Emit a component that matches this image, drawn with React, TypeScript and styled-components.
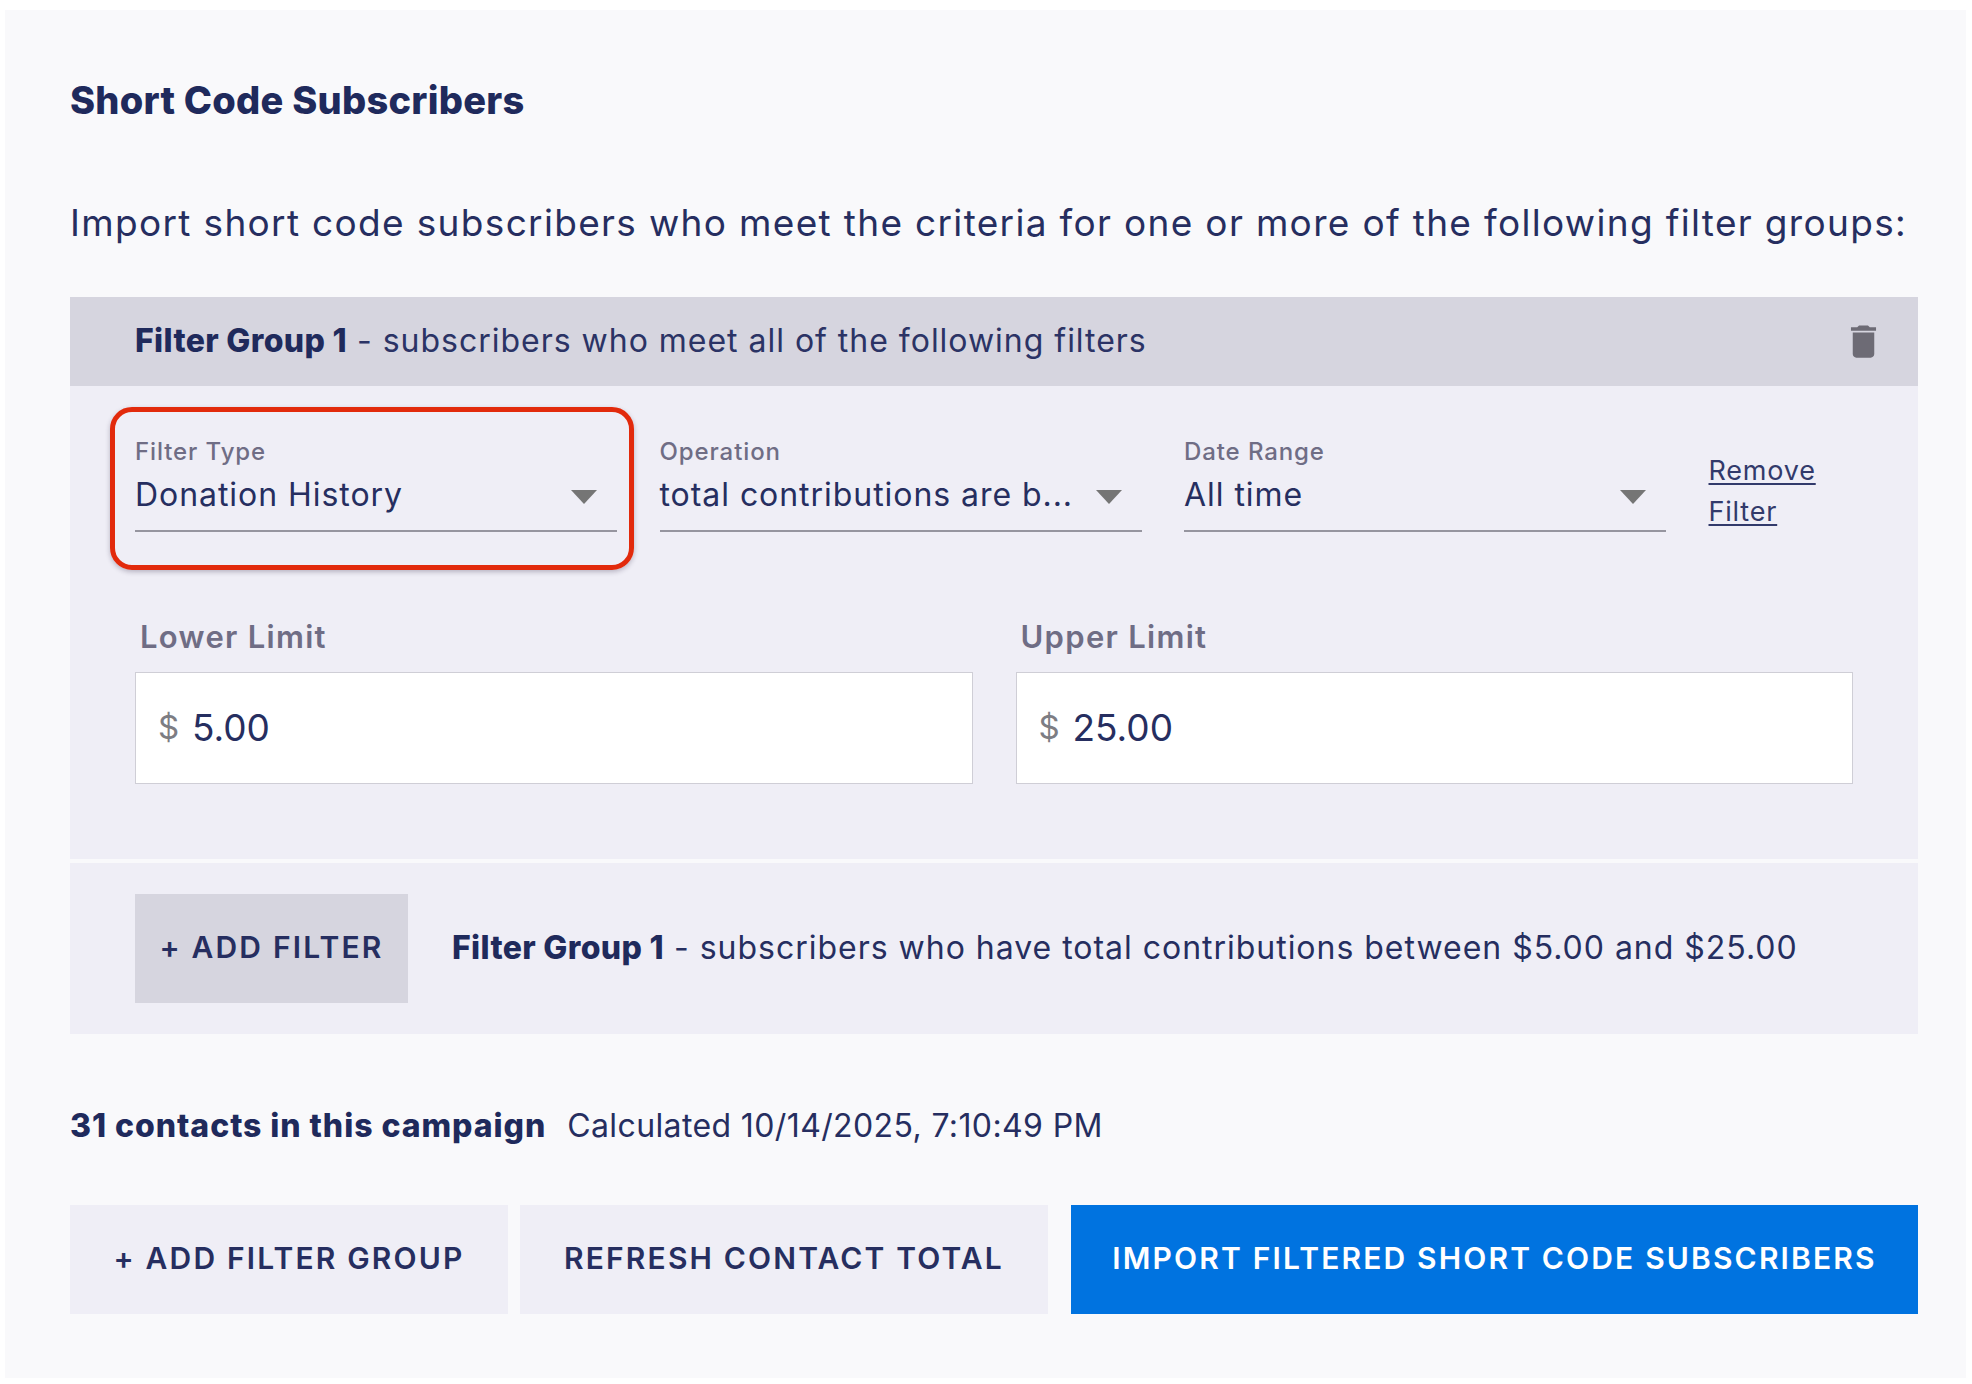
import React from "react";
import styled, { createGlobalStyle } from "styled-components";
import { MdDelete } from "react-icons/md";

const GlobalStyle = createGlobalStyle`
  html, body {
    margin: 0;
    padding: 0;
    background: #ffffff;
  }
  * {
    box-sizing: border-box;
  }
`;

const Page = styled.div`
  width: 1972px;
  height: 1384px;
  padding: 10px 6px 6px 5px;
  font-family: Inter, "Liberation Sans", sans-serif;
  color: #262e60;
`;

const Card = styled.section`
  height: 100%;
  background: #f9f9fb;
  padding: 68px 48px 0 65px;
`;

const Title = styled.h2`
  margin: 0 0 76px;
  font-size: 38px;
  line-height: 44px;
  font-weight: 800;
  letter-spacing: 0.25px;
  color: #1f2a5c;
`;

const Intro = styled.p`
  margin: 0 0 49px;
  font-size: 37px;
  line-height: 50px;
  font-weight: 400;
  letter-spacing: 1.33px;
  white-space: nowrap;
`;

const GroupHeader = styled.div`
  height: 89px;
  padding: 0 33px 0 65px;
  background: #d6d5df;
  display: flex;
  align-items: center;
  justify-content: space-between;
  font-size: 32px;
  color: #2b3365;
`;

const Strong = styled.strong`
  font-weight: 800;
  letter-spacing: 0.35px;
  color: #1f2a5c;
`;

const Summary = styled.span`
  margin-bottom: 3px;
  letter-spacing: 0.98px;
`;

const GroupBody = styled.div`
  background: #efeef6;
  padding: 52px 65px 75px 65px;
`;

const FilterRow = styled.div`
  display: flex;
  gap: 42.5px;
  align-items: flex-start;
`;

const SelectField = styled.div`
  position: relative;
  width: 482px;
  height: 94px;
  border-bottom: 2px solid #96959f;
`;

const SelectLabel = styled.div`
  font-size: 24px;
  line-height: 28px;
  font-weight: 500;
  letter-spacing: 0.9px;
  color: #6f6d85;
`;

const SelectValue = styled.div`
  display: flex;
  align-items: center;
  justify-content: space-between;
  height: 44px;
  margin-top: 7px;
  padding-right: 20px;
  font-size: 32px;
  line-height: 44px;
  letter-spacing: 0.95px;
  white-space: nowrap;
`;

const Arrow = styled.svg`
  width: 26px;
  height: 14px;
  margin-top: 4px;
  flex: none;
  fill: #757575;
`;

const Highlight = styled.div`
  position: absolute;
  left: -25px;
  top: -31px;
  width: 524px;
  height: 163px;
  border: 5px solid #e22a0c;
  border-radius: 22px;
  box-shadow: 0 2px 5px rgba(40, 30, 60, 0.28);
  pointer-events: none;
`;

const RemoveLink = styled.a`
  width: 140px;
  margin-top: 12px;
  font-size: 27px;
  line-height: 41px;
  letter-spacing: 0.8px;
  text-decoration: underline;
  text-underline-offset: 3px;
  color: #323a6b;
`;

const LimitGrid = styled.div`
  display: grid;
  grid-template-columns: 1fr 1fr;
  gap: 43px;
  margin-top: 87px;
`;

const LimitLabel = styled.label`
  display: block;
  padding-left: 5px;
  margin-bottom: 17px;
  font-size: 31px;
  line-height: 36px;
  font-weight: 600;
  letter-spacing: 1.3px;
  color: #6f6d85;
`;

const AmountBox = styled.div`
  height: 112px;
  background: #ffffff;
  border: 1px solid #cfced6;
  display: flex;
  align-items: center;
  padding: 0 0 2px 22px;
  font-size: 37px;
`;

const Dollar = styled.span`
  width: 34px;
  color: #7d7d83;
  font-size: 33px;
`;

const GroupFooter = styled.div`
  margin-top: 4px;
  height: 171px;
  background: #efeef6;
  padding-left: 65px;
  display: flex;
  align-items: center;
  gap: 44px;
  font-size: 32px;
  white-space: nowrap;
`;

const ActionButton = styled.button<{ $width: number; $tone: "soft" | "mid" | "primary" }>`
  width: ${(p) => p.$width}px;
  height: 109px;
  flex: none;
  border: 0;
  padding: 0 0 3px;
  font-family: inherit;
  font-size: 30px;
  font-weight: 600;
  letter-spacing: 2.15px;
  white-space: nowrap;
  background: ${(p) =>
    p.$tone === "primary" ? "#0073e0" : p.$tone === "mid" ? "#d6d5df" : "#efeef6"};
  color: ${(p) => (p.$tone === "primary" ? "#ffffff" : "#262e60")};
`;

const ContactLine = styled.div`
  margin-top: 70px;
  display: flex;
  gap: 21px;
  font-size: 32px;
  line-height: 44px;
`;

const ContactCount = styled(Strong)`
  letter-spacing: 0.95px;
`;

const Calculated = styled.span`
  letter-spacing: 0.38px;
`;

const ButtonRow = styled.div`
  margin-top: 57px;
  display: flex;
  gap: 12px;
`;

const PrimarySlot = styled.div`
  margin-left: 11px;
`;

function CaretDown() {
  return (
    <Arrow viewBox="0 0 26 14">
      <path d="M0 0h26L13 14z" />
    </Arrow>
  );
}

function Select(props: { label: string; value: string; highlighted?: boolean }) {
  return (
    <SelectField>
      <SelectLabel>{props.label}</SelectLabel>
      <SelectValue>
        <span>{props.value}</span>
        <CaretDown />
      </SelectValue>
      {props.highlighted && <Highlight />}
    </SelectField>
  );
}

function Limit(props: { label: string; value: string }) {
  return (
    <div>
      <LimitLabel>{props.label}</LimitLabel>
      <AmountBox>
        <Dollar>$</Dollar>
        <span>{props.value}</span>
      </AmountBox>
    </div>
  );
}

export default function App() {
  return (
    <Page>
      <GlobalStyle />
      <Card>
        <Title>Short Code Subscribers</Title>
        <Intro>
          Import short code subscribers who meet the criteria for one or more of the following filter groups:
        </Intro>
        <GroupHeader>
          <Summary>
            <Strong>Filter Group 1</Strong> - subscribers who meet all of the following filters
          </Summary>
          <MdDelete size={43} color="#6d6b75" />
        </GroupHeader>
        <GroupBody>
          <FilterRow>
            <Select label="Filter Type" value="Donation History" highlighted />
            <Select label="Operation" value="total contributions are b..." />
            <Select label="Date Range" value="All time" />
            <RemoveLink>Remove Filter</RemoveLink>
          </FilterRow>
          <LimitGrid>
            <Limit label="Lower Limit" value="5.00" />
            <Limit label="Upper Limit" value="25.00" />
          </LimitGrid>
        </GroupBody>
        <GroupFooter>
          <ActionButton $width={273} $tone="mid">+ ADD FILTER</ActionButton>
          <Summary>
            <Strong>Filter Group 1</Strong> - subscribers who have total contributions between $5.00 and $25.00
          </Summary>
        </GroupFooter>
        <ContactLine>
          <ContactCount>31 contacts in this campaign</ContactCount>
          <Calculated>Calculated 10/14/2025, 7:10:49 PM</Calculated>
        </ContactLine>
        <ButtonRow>
          <ActionButton $width={438} $tone="soft">+ ADD FILTER GROUP</ActionButton>
          <ActionButton $width={528} $tone="soft">REFRESH CONTACT TOTAL</ActionButton>
          <PrimarySlot>
            <ActionButton $width={847} $tone="primary">IMPORT FILTERED SHORT CODE SUBSCRIBERS</ActionButton>
          </PrimarySlot>
        </ButtonRow>
      </Card>
    </Page>
  );
}
